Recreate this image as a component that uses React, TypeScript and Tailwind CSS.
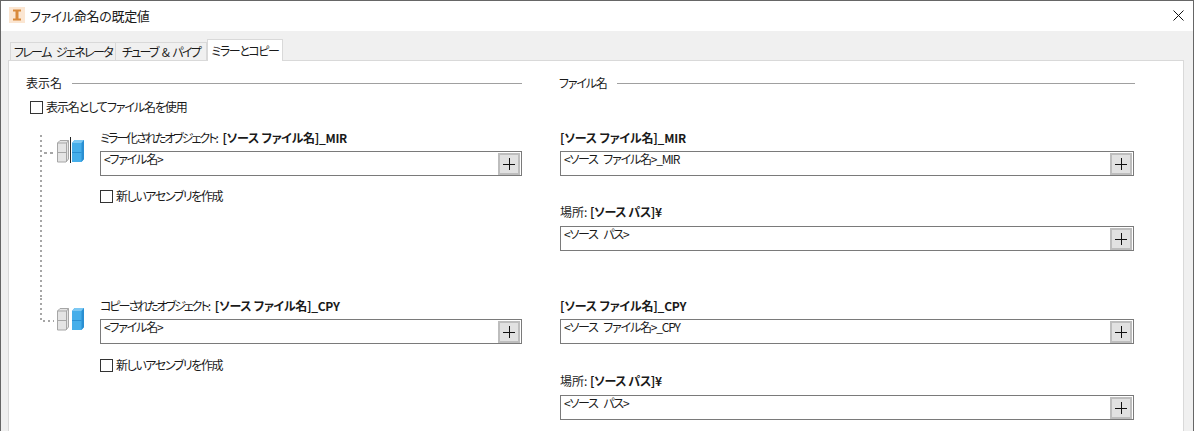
import React from 'react';

const font = "font-['Noto_Sans_CJK_JP','Noto_Sans',sans-serif] [font-feature-settings:'palt']";

function Legend({ title, lineClass, textClass }: { title: string; lineClass: string; textClass?: string }) {
  return (
    <div className="flex h-[16px] items-center">
      <span className={`text-[12px] leading-none text-[#1a1a1a] ${textClass ?? ''}`}>{title}</span>
      <div className={`h-px bg-[#a0a0a0] ${lineClass}`} />
    </div>
  );
}

function Check({ label, textClass }: { label: string; textClass: string }) {
  return (
    <div className="flex h-[16px] items-center">
      <div className="h-[13px] w-[13px] border border-[#333333] bg-white" />
      <span className={`ml-[3px] text-[12px] leading-none text-[#1a1a1a] ${textClass}`}>{label}</span>
    </div>
  );
}

function Field({ value }: { value: string }) {
  return (
    <div className="flex h-[25px] items-start justify-between border border-[#7a7a7a] bg-white pr-px pt-px">
      <span className="-mt-px pl-[3px] text-[12px] leading-[14px] tracking-[-1.2px] text-[#1a1a1a] [word-spacing:4px]">{value}</span>
      <div className="flex h-[22px] w-[22px] items-center justify-center border-2 border-[#bdbdbd] bg-[#e1e1e1]">
        <svg width="12" height="12" viewBox="0 0 12 12">
          <path d="M0 6h12M6 0v12" stroke="#111" strokeWidth="1" shapeRendering="crispEdges" />
        </svg>
      </div>
    </div>
  );
}

function Cubes({ mirror }: { mirror: boolean }) {
  return (
    <svg width="30" height="27" viewBox="0 0 30 27" className="shrink-0">
      <path d="M1.5 6l2.5-2.5h8.5v18.5l-2.5 3h-8.5z" fill="#e4e4e4" stroke="#a6a6a6" />
      <path d="M1.5 6h9v19M1.5 15.5h9M10.5 6l2-2.5" fill="none" stroke="#a6a6a6" />
      {mirror && <path d="M14.5 0v26" stroke="#222" />}
      <path d="M16 6l2.5-3h9.5v19l-2.5 3h-9.5z" fill="#45aeea" />
      <path d="M16 6l2.5-3h9.5l-2.5 3z" fill="#7cc8f3" />
      <path d="M25.5 6l2.5-3v19l-2.5 3z" fill="#2a8fd2" />
      <path d="M16 15.5h9.5" stroke="#2a8fd2" />
    </svg>
  );
}

function LeftRow({ label, value, suffix, mirror, last }: { label: string; value: string; suffix: string; mirror: boolean; last: boolean }) {
  return (
    <div className="flex h-[168px]">
      <div className="relative flex w-[74px] shrink-0 items-start">
        <svg width="30" height={last ? 24 : 168} className="absolute left-[14px] top-0">
          {last ? (
            <path d="M1 0V23H14" fill="none" stroke="#a6a6a6" strokeWidth="2" strokeDasharray="2 3" />
          ) : (
            <>
              <path d="M1 5V168" fill="none" stroke="#a6a6a6" strokeWidth="2" strokeDasharray="2 3" />
              <path d="M4 23H14" fill="none" stroke="#a6a6a6" strokeWidth="2" strokeDasharray="3 3" />
            </>
          )}
        </svg>
        <div className="ml-[30px] mt-[7px]">
          <Cubes mirror={mirror} />
        </div>
      </div>
      <div className="flex-1">
        <div className="h-[21px] text-[12px] leading-[16px] text-[#1a1a1a]">
          <span className="tracking-[-2px]">{label}</span>{' '}
          <span className="ml-[3px] font-bold tracking-[-0.3px]">[ソース ファイル名]_{suffix}</span>
        </div>
        <Field value={value} />
        <div className={last ? 'mt-[13px]' : 'mt-[12px]'}>
          <Check label="新しいアセンブリを作成" textClass="tracking-[-1.4px]" />
        </div>
      </div>
    </div>
  );
}

function RightRow({ suffix, path }: { suffix: string; path: string }) {
  return (
    <div className="h-[168px] w-[575px] pl-px">
      <div className="h-[21px] text-[12px] font-bold leading-[16px] tracking-[-0.2px] text-[#1a1a1a]">[ソース ファイル名]_{suffix}</div>
      <Field value={`<ソース ファイル名>_${suffix}`} />
      <div className={`h-[22px] text-[12px] leading-[16px] text-[#1a1a1a] ${path}`}>
        場所: <span className="font-bold tracking-[-0.4px]">[ソース パス]¥</span>
      </div>
      <Field value="<ソース パス>" />
    </div>
  );
}

export default function App() {
  return (
    <div className={`${font} h-[431px] w-[1194px] overflow-hidden border-x border-t border-[#666666] bg-[#f0f0f0]`}>
      {/* title bar */}
      <div className="flex h-[30px] items-center justify-between bg-white pb-[2px] pl-[8px] pr-[9px]">
        <div className="flex items-center">
          <svg width="16" height="16" viewBox="0 0 16 16">
            <rect width="16" height="16" fill="#fbe6d2" />
            <path d="M4 2.5h8v2H9.5v7H12v2H4v-2h2.5v-7H4z" fill="#d98a3c" />
          </svg>
          <span className="ml-[5px] text-[13px] leading-none tracking-[-0.3px] text-[#1a1a1a]">ファイル命名の既定値</span>
        </div>
        <svg width="11" height="11" viewBox="0 0 11 11">
          <path d="M0.5 0.5l10 10M10.5 0.5l-10 10" stroke="#111" strokeWidth="1" />
        </svg>
      </div>

      {/* tabs */}
      <div className="flex h-[29px] items-end pl-[9px]">
        <div className="flex h-[18px] w-[106px] items-center justify-center whitespace-nowrap border border-b-0 border-[#d9d9d9] bg-[#f0f0f0] text-[12px] leading-none tracking-[-1.6px] text-[#1a1a1a] [word-spacing:4px]">
          フレーム ジェネレータ
        </div>
        <div className="flex h-[18px] w-[91px] items-center justify-center whitespace-nowrap border border-b-0 border-l-0 border-[#d9d9d9] bg-[#f0f0f0] text-[12px] leading-none tracking-[-1.7px] text-[#1a1a1a] [word-spacing:3px]">
          チューブ &amp; パイプ
        </div>
        <div className="relative z-10 -mb-px flex h-[22px] w-[76px] items-center justify-center whitespace-nowrap border border-b-0 border-[#d9d9d9] bg-white text-[12px] leading-none tracking-[-1.4px] text-[#1a1a1a]">
          ミラーとコピー
        </div>
      </div>

      {/* panel */}
      <div className="ml-[7px] flex h-[400px] w-[1176px] border border-[#d9d9d9] bg-white pl-[17px] pt-[14px]">
        <div className="w-[496px]">
          <Legend title="表示名" lineClass="ml-[10px] flex-1" />
          <div className="ml-[4px] mt-[8px]">
            <Check label="表示名としてファイル名を使用" textClass="tracking-[-1.1px]" />
          </div>
          <div className="mt-[15px]">
            <LeftRow label="ミラー化されたオブジェクト:" value="<ファイル名>" suffix="MIR" mirror last={false} />
            <LeftRow label="コピーされたオブジェクト:" value="<ファイル名>" suffix="CPY" mirror={false} last />
          </div>
        </div>
        <div className="ml-[37px] w-[576px]">
          <Legend title="ファイル名" textClass="tracking-[-1.2px]" lineClass="ml-[10px] flex-1" />
          <div className="mt-[39px]">
            <RightRow suffix="MIR" path="mt-[28px]" />
            <RightRow suffix="CPY" path="mt-[29px]" />
          </div>
        </div>
      </div>
    </div>
  );
}
